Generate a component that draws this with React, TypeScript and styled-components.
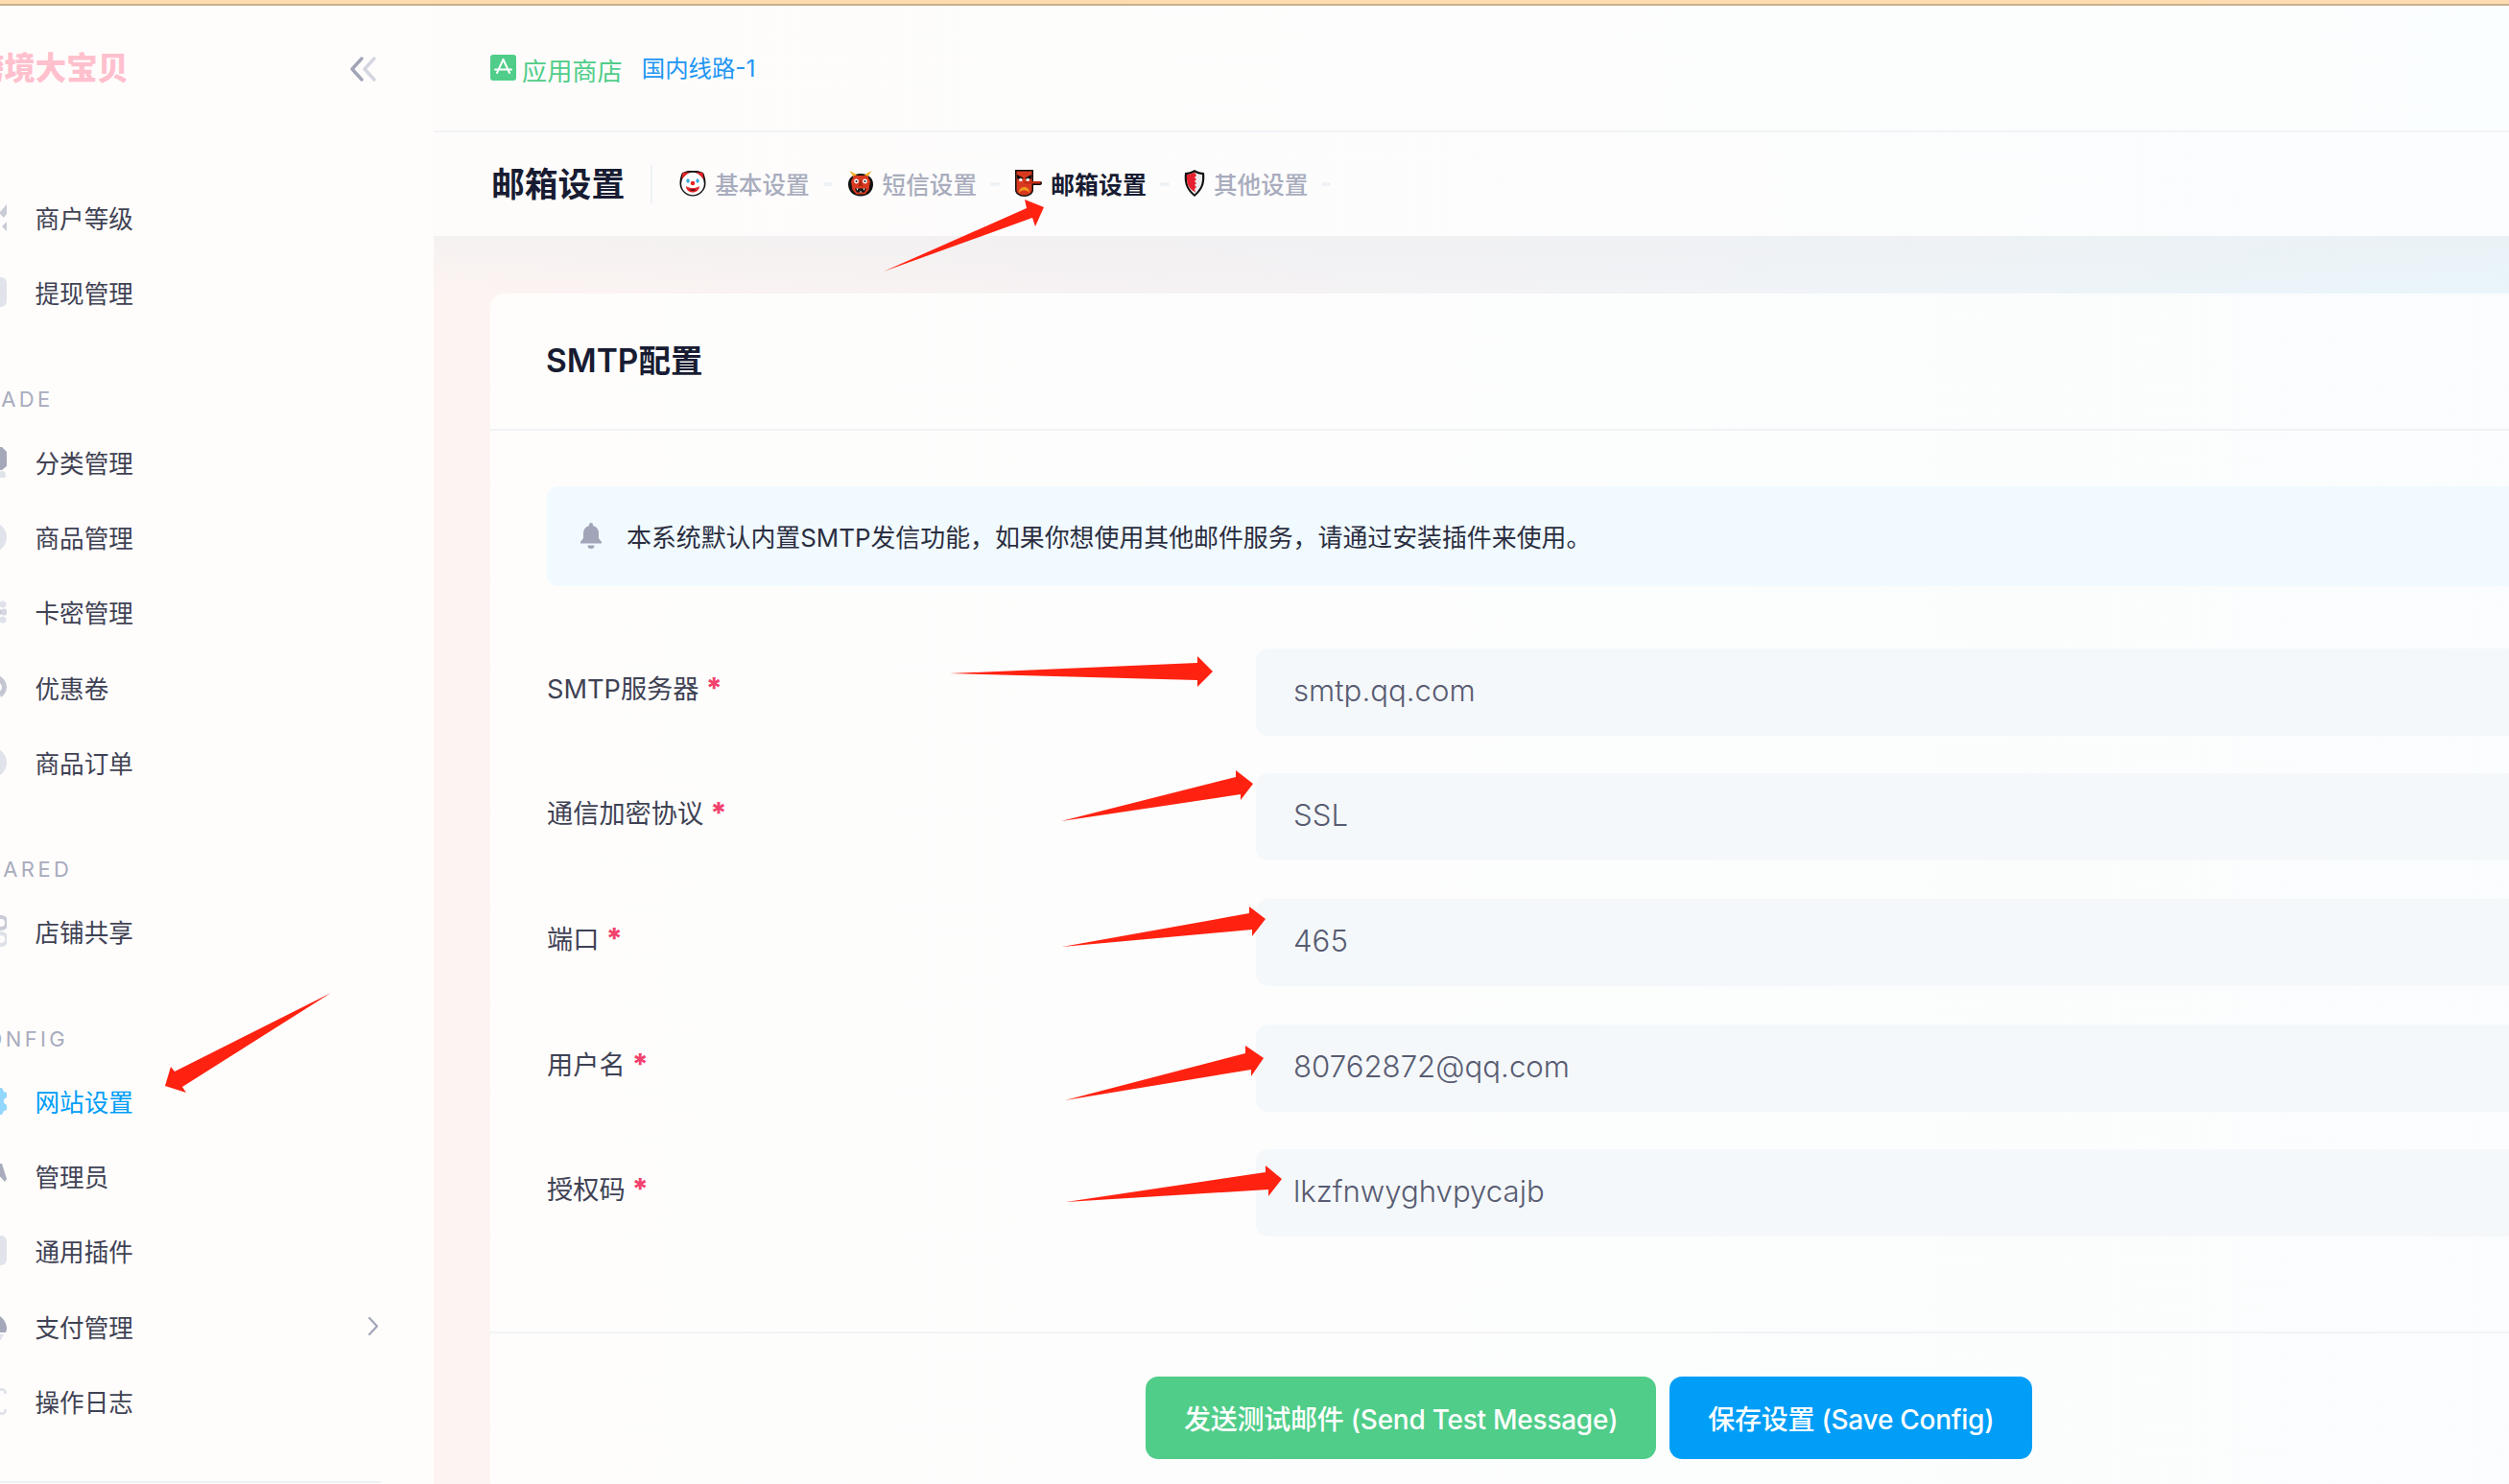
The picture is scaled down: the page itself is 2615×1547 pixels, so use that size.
import React from "react";
import styled, { createGlobalStyle } from "styled-components";

const GlobalStyle = createGlobalStyle`
  html, body {
    margin: 0;
    padding: 0;
    overflow: hidden;
    background: #fdf5f3;
  }
  * {
    box-sizing: border-box;
  }
`;

const FONT = `Inter, "Noto Sans CJK SC", sans-serif`;

const Page = styled.div`
  position: relative;
  width: 2615px;
  height: 1547px;
  overflow: hidden;
  font-family: ${FONT};
`;

const TopStrip = styled.div`
  height: 6px;
  background: #ffdcb0;
  border-bottom: 2px solid #c9b08f;
`;

const Shell = styled.div`
  display: flex;
  height: 1541px;
`;

const Sidebar = styled.aside`
  flex: 0 0 452px;
  background: #fffdfc;
  overflow: hidden;
`;

const LogoRow = styled.div`
  display: flex;
  align-items: center;
  justify-content: space-between;
  height: 132px;
  margin-left: -28px;
  padding-right: 59px;
`;

const Logo = styled.div`
  font-size: 32.4px;
  line-height: 1;
  font-weight: 900;
  color: #ffc0cd;
`;

const Menu = styled.nav`
  margin-top: 49.5px;
  margin-left: -26px;
  padding-right: 57px;
`;

const SectionLabel = styled.div`
  display: flex;
  align-items: flex-end;
  height: 98.5px;
  margin-left: -8px;
  padding-bottom: 13px;
  font-size: 22px;
  line-height: 26px;
  letter-spacing: 3.4px;
  color: #a8acbd;
`;

const MenuItem = styled.div<{ $active?: boolean }>`
  display: flex;
  align-items: center;
  height: 78.2px;
  gap: 29.5px;
  font-size: 25.6px;
  color: ${(p) => (p.$active ? "#009ef7" : "#3f4254")};
`;

const MenuText = styled.span`
  flex: 1;
`;

const SidebarFoot = styled.div`
  margin-top: 45px;
  width: 397px;
  border-top: 2px solid #eff2f5;
`;

const Main = styled.main`
  flex: 1;
  min-width: 0;
  display: flex;
  flex-direction: column;
`;

const Header = styled.header`
  display: flex;
  align-items: center;
  gap: 20px;
  height: 132px;
  padding: 0 0 2px 59px;
  background: linear-gradient(90deg, #fefcfb, #fbfefe);
  border-bottom: 2px solid #f2f3f6;
`;

const StoreLink = styled.div`
  display: flex;
  align-items: center;
  gap: 6px;
  font-size: 26.2px;
  color: #50cd89;

  span {
    margin-top: 5px;
  }
`;

const LineLink = styled.div`
  margin-top: -2px;
  font-size: 24.4px;
  color: #2196f3;
`;

const Toolbar = styled.div`
  display: flex;
  align-items: center;
  height: 108px;
  padding-left: 60px;
  background: linear-gradient(90deg, #fefcfb, #fbfdfe);
`;

const PageTitle = styled.h1`
  margin: 0;
  font-size: 34.8px;
  line-height: 1;
  font-weight: 700;
  color: #181c32;
`;

const ToolbarRule = styled.div`
  width: 2px;
  height: 40px;
  margin: 0 28px 0 27px;
  background: #eff2f5;
`;

const Tab = styled.div<{ $active?: boolean }>`
  display: flex;
  align-items: center;
  gap: 9px;
  margin-top: -2px;
  font-size: ${(p) => (p.$active ? "25px" : "24.6px")};
  font-weight: ${(p) => (p.$active ? 600 : 500)};
  color: ${(p) => (p.$active ? "#181c32" : "#a8acbd")};
`;

const TabDash = styled.span`
  width: 10px;
  height: 4px;
  margin: 0 15px 0 14px;
  border-radius: 2px;
  background: #eff2f5;
`;

const Content = styled.div`
  flex: 1;
  min-height: 0;
  padding: 60px 0 0 59px;
  background:
    linear-gradient(180deg, rgba(236, 238, 240, 0.45), rgba(255, 255, 255, 0) 60px),
    linear-gradient(90deg, #fdf4f2 0%, #f6f2f3 35%, #e9f5fb 100%);
`;

const Card = styled.section`
  width: 2400px;
  height: 1300px;
  border-radius: 14px 14px 0 0;
  background: linear-gradient(90deg, #fefdfc, #fafdfe);
`;

const CardHead = styled.div`
  display: flex;
  align-items: center;
  height: 142.5px;
  padding-left: 58px;
  border-bottom: 2px solid #f2f3f6;
`;

const CardTitle = styled.h2`
  margin: 0;
  font-size: 33.5px;
  line-height: 1;
  font-weight: 600;
  color: #181c32;
`;

const CardBody = styled.div`
  padding: 58px 0 0 59px;
  height: 941.5px;
  border-bottom: 2px solid #f2f3f6;
`;

const Notice = styled.div`
  display: flex;
  align-items: center;
  gap: 24px;
  height: 104px;
  margin-bottom: 65px;
  padding-left: 33px;
  border-radius: 12px 0 0 12px;
  background: #f1faff;
  font-size: 25.9px;
  color: #2b2e40;
`;

const FormRow = styled.div`
  display: flex;
  align-items: flex-start;
  height: 130.7px;
`;

const FieldLabel = styled.label`
  flex: 0 0 739px;
  padding-top: 23px;
  font-size: 27.2px;
  line-height: 36px;
  color: #3f4254;
`;

const Required = styled.span`
  margin-left: 7px;
  font-size: 30px;
  font-weight: 800;
  color: #f1416c;
`;

const FieldValue = styled.div`
  flex: 1;
  height: 91px;
  padding-left: 39px;
  border-radius: 13px 0 0 13px;
  background: #f5f8fa;
  font-size: 31.2px;
  font-weight: 300;
  line-height: 89px;
  color: #585c72;
`;

const CardFoot = styled.div`
  display: flex;
  gap: 14px;
  padding: 45px 0 0 683px;
`;

const ActionButton = styled.button<{ $color: string }>`
  height: 86px;
  padding: 0 40px;
  border: 0;
  border-radius: 13px;
  background: ${(p) => p.$color};
  font-family: ${FONT};
  font-size: 28px;
  font-weight: 500;
  letter-spacing: -0.25px;
  color: #fff;
`;

const Arrows = styled.svg`
  position: absolute;
  left: 0;
  top: 0;
  pointer-events: none;
`;

const Collapse = () => (
  <svg width="28" height="26" viewBox="0 0 28 26" fill="none" strokeWidth="3.4" strokeLinecap="round" strokeLinejoin="round">
    <path d="M12 2 2 13l10 11" stroke="#a1a5b7" />
    <path d="M25 2 15 13l10 11" stroke="#d3d6df" />
  </svg>
);

const StoreIcon = () => (
  <svg width="27" height="27" viewBox="0 0 27 27">
    <rect width="27" height="27" rx="3" fill="#50cd89" />
    <path d="M13.5 5 7 19M13.5 5 20 19M5 15.5h17" stroke="#fff" strokeWidth="2" fill="none" strokeLinecap="round" />
  </svg>
);

const BellIcon = () => (
  <svg width="26" height="27" viewBox="0 0 26 27" fill="#a1a5b7">
    <path d="M13 0c1.2 0 2 .9 2 2v1c4 1 6 4.300 6 8v5l3 4v1.500H2V20l3-4v-5c0-3.700 2-7 6-8V2c0-1.100.8-2 2-2z" />
    <path d="M9.500 23.500h7a3.500 3.500 0 0 1-7 0z" />
  </svg>
);

const ChevronRight = () => (
  <svg width="12" height="21" viewBox="0 0 12 21" fill="none" stroke="#a1a5b7" strokeWidth="2.2" strokeLinecap="round" strokeLinejoin="round">
    <path d="M2 2l8 8.500L2 19" />
  </svg>
);

// only the last few pixels of these show, the sidebar is cut off at the left edge
const menuIcons: Record<string, React.ReactNode> = {
  grade: <path d="M33 3 25 12 30 17 33 13zM33 21 28 26 33 31z" fill="#c9ccd6" />,
  card: <rect x="6" y="1" width="27" height="31" rx="6" fill="#e1e3ea" />,
  hex: (
    <>
      <path d="M16 1h12l5 5v15l-5 4H16z" fill="#a4a8b9" />
      <circle cx="28" cy="30" r="4" fill="#e1e3ea" />
    </>
  ),
  circle: <circle cx="17" cy="17" r="16" fill="#e1e3ea" />,
  flower: (
    <>
      <circle cx="29" cy="9" r="3.500" fill="#dfe1e8" />
      <circle cx="30" cy="17" r="3.500" fill="#d5d8e1" />
      <circle cx="29" cy="25" r="3.500" fill="#dfe1e8" />
      <circle cx="24" cy="17" r="3.500" fill="#c4c7d2" />
    </>
  ),
  ring: <path d="M18 3a14 14 0 0 1 15 13c0 5-3 9-6 11l-2-6c2-1 3-3 3-5a9 9 0 0 0-9-7z" fill="#c4c7d2" />,
  share: (
    <>
      <circle cx="27" cy="8" r="6" fill="none" stroke="#c9ccd6" strokeWidth="4" />
      <circle cx="27" cy="25" r="6" fill="none" stroke="#dfe1e8" strokeWidth="4" />
    </>
  ),
  gear: <path d="M24 3h4l2 4 3 1v5l-3 2v4l3 2v5l-3 1-2 4h-8V3z" fill="#93d6fb" />,
  person: <path d="M24 4l4 0 5 16-2 3-7-8z" fill="#a8acbd" />,
  pay: (
    <>
      <path d="M14 3a17 17 0 0 1 19 15c0 1 0 3-1 5H14z" fill="#a4a8b9" />
      <path d="M14 25h16l-3 6H14z" fill="#e1e3ea" />
    </>
  ),
  log: <path d="M26 3h4l3 3v3h-3V6h-4zM30 25h3v3l-3 3h-4v-3h4z" fill="#e1e3ea" />,
};

const MenuIcon = ({ name }: { name: string }) => (
  <svg width="33" height="33" viewBox="0 0 33 33">
    {menuIcons[name]}
  </svg>
);

const ClownEmoji = () => (
  <svg width="28" height="28" viewBox="0 0 28 28">
    <path d="M3 3 9 1h10l6 2c1.500 3 2.500 7 2.500 11a13.500 13.500 0 0 1-27 0C.5 10 1.500 6 3 3z" fill="#111" />
    <circle cx="14" cy="14.500" r="11.800" fill="#fff" />
    <path d="M2.500 10 3.500 3 11 2.500C7.500 4.500 5 7 2.500 10zM25.500 10l-1-7L17 2.500C20.500 4.500 23 7 25.500 10z" fill="#e8242a" />
    <ellipse cx="9" cy="11.500" rx="1.700" ry="2.200" fill="#38a9dc" />
    <ellipse cx="19" cy="11.500" rx="1.700" ry="2.200" fill="#38a9dc" />
    <circle cx="14" cy="14" r="2.300" fill="#e8242a" />
    <path d="M7 17c2 1.500 4.500 2 7 2s5-.5 7-2c0 4-3 6.500-7 6.500S7 21 7 17z" fill="#e8242a" />
    <path d="M10.500 20c2 .8 5 .8 7 0-.8 1.300-2 1.800-3.500 1.800s-2.700-.5-3.500-1.800z" fill="#111" />
  </svg>
);

const OniEmoji = () => (
  <svg width="28" height="28" viewBox="0 0 28 28">
    <path d="M14 4c7 0 13 4 13 11 0 7-5 12.500-13 12.500S1 22 1 15C1 8 7 4 14 4z" fill="#111" />
    <path d="M7 8 2.500 1 10 5zM21 8l4.500-7L18 5z" fill="#f0b429" />
    <path d="M7 6h14l3 6-1.500 9-4 4.500H9.500l-4-4.500L4 12z" fill="#d9391f" />
    <circle cx="9.500" cy="12" r="2.400" fill="#fff" />
    <circle cx="18.500" cy="12" r="2.400" fill="#fff" />
    <circle cx="9.500" cy="12" r="1" fill="#111" />
    <circle cx="18.500" cy="12" r="1" fill="#111" />
    <path d="M14 10l2.500 7h-5z" fill="#a82812" />
    <path d="M8 19.500h12l-2 4h-8z" fill="#111" />
    <path d="M9.500 19.500h2l-1 2.200zM16.500 19.500h2l-1 2.200zM13 23.500l1-2 1 2z" fill="#fff" />
  </svg>
);

const TenguEmoji = () => (
  <svg width="29" height="28" viewBox="0 0 29 28">
    <path d="M1 0h19v12h7c1.500 0 2 1 2 1.700s-.5 2.300-2 2.300h-7v5c0 4-4.500 7-9.500 7S1 25 1 21z" fill="#111" />
    <path d="M2.500 1.500h16V21c0 3-3.500 5.500-8 5.500s-8-2.500-8-5.500z" fill="#d9391f" />
    <path d="M3 5l6.500 3.500-2 2.500L3 9zM18 5l-6.500 3.500 2 2.500L18 9z" fill="#111" />
    <circle cx="6.800" cy="10.500" r="1.800" fill="#fff" />
    <circle cx="14.200" cy="10.500" r="1.800" fill="#fff" />
    <path d="M10.500 12H27c1 0 1 2.500 0 2.500H10.500z" fill="#c22a16" />
    <path d="M5 24c0-4 3-6 5.500-6s5.500 2 5.500 6c-1.500-2-3.500-2.800-5.500-2.800S6.500 22 5 24z" fill="#f29a1f" />
  </svg>
);

const ShieldEmoji = () => (
  <svg width="22" height="28" viewBox="0 0 22 28">
    <path d="M11 0c3 2 7 3 10 3 1 9 0 17-10 25C1 20 0 12 1 3c3 0 7-1 10-3z" fill="#111" />
    <path d="M11 2.500c2.500 1.500 5 2.300 8 2.500.5 7.500-.5 14-8 20.500C3.500 19 2.500 12.500 3 5c3-.2 5.500-1 8-2.500z" fill="#ececec" />
    <path d="M11 2.500 13 6l-2 2 2 2-2 2 2 2-2 2 2 2-2 2 1 3.500C3.500 19 2.500 12.500 3 5c3-.2 5.500-1 8-2.500z" fill="#e5202e" />
  </svg>
);

type NavRow =
  | { label: string }
  | { text: string; icon: string; active?: boolean; more?: boolean };

const navRows: NavRow[] = [
  { text: "商户等级", icon: "grade" },
  { text: "提现管理", icon: "card" },
  { label: "TRADE" },
  { text: "分类管理", icon: "hex" },
  { text: "商品管理", icon: "circle" },
  { text: "卡密管理", icon: "flower" },
  { text: "优惠卷", icon: "ring" },
  { text: "商品订单", icon: "circle" },
  { label: "SHARED" },
  { text: "店铺共享", icon: "share" },
  { label: "CONFIG" },
  { text: "网站设置", icon: "gear", active: true },
  { text: "管理员", icon: "person" },
  { text: "通用插件", icon: "card" },
  { text: "支付管理", icon: "pay", more: true },
  { text: "操作日志", icon: "log" },
];

const tabs = [
  { text: "基本设置", emoji: <ClownEmoji /> },
  { text: "短信设置", emoji: <OniEmoji /> },
  { text: "邮箱设置", emoji: <TenguEmoji />, active: true },
  { text: "其他设置", emoji: <ShieldEmoji /> },
];

const fields = [
  { label: "SMTP服务器", value: "smtp.qq.com" },
  { label: "通信加密协议", value: "SSL" },
  { label: "端口", value: "465" },
  { label: "用户名", value: "80762872@qq.com" },
  { label: "授权码", value: "lkzfnwyghvpycajb" },
];

const arrows = [
  "921,283 1070,217 1068,208 1088,216 1079,236 1076,227",
  "345,1035 182,1117 178,1112 172,1132 194,1139 190,1133",
  "990,702 1248,691 1248,684 1264,700 1248,716 1248,709",
  "1106,856 1288,810 1288,803 1306,817 1293,834 1293,828",
  "1107,987 1302,952 1302,945 1319,958 1305,976 1305,969",
  "1110,1147 1298,1098 1298,1090 1317,1103 1304,1122 1304,1115",
  "1111,1253 1319,1222 1319,1215 1336,1229 1322,1247 1322,1240",
];

export default function App() {
  return (
    <Page>
      <GlobalStyle />
      <TopStrip />
      <Shell>
        <Sidebar>
          <LogoRow>
            <Logo>跨境大宝贝</Logo>
            <Collapse />
          </LogoRow>
          <Menu>
            {navRows.map((row, idx) =>
              "label" in row ? (
                <SectionLabel key={idx}>{row.label}</SectionLabel>
              ) : (
                <MenuItem key={idx} $active={row.active}>
                  <MenuIcon name={row.icon} />
                  <MenuText>{row.text}</MenuText>
                  {row.more ? <ChevronRight /> : null}
                </MenuItem>
              )
            )}
          </Menu>
          <SidebarFoot />
        </Sidebar>
        <Main>
          <Header>
            <StoreLink>
              <StoreIcon />
              <span>应用商店</span>
            </StoreLink>
            <LineLink>国内线路-1</LineLink>
          </Header>
          <Toolbar>
            <PageTitle>邮箱设置</PageTitle>
            <ToolbarRule />
            {tabs.map((tab) => (
              <React.Fragment key={tab.text}>
                <Tab $active={tab.active}>
                  {tab.emoji}
                  {tab.text}
                </Tab>
                <TabDash />
              </React.Fragment>
            ))}
          </Toolbar>
          <Content>
            <Card>
              <CardHead>
                <CardTitle>SMTP配置</CardTitle>
              </CardHead>
              <CardBody>
                <Notice>
                  <BellIcon />
                  本系统默认内置SMTP发信功能，如果你想使用其他邮件服务，请通过安装插件来使用。
                </Notice>
                {fields.map((field) => (
                  <FormRow key={field.label}>
                    <FieldLabel>
                      {field.label}
                      <Required>*</Required>
                    </FieldLabel>
                    <FieldValue>{field.value}</FieldValue>
                  </FormRow>
                ))}
              </CardBody>
              <CardFoot>
                <ActionButton $color="#50cd89">发送测试邮件 (Send Test Message)</ActionButton>
                <ActionButton $color="#009ef7">保存设置 (Save Config)</ActionButton>
              </CardFoot>
            </Card>
          </Content>
        </Main>
      </Shell>
      <Arrows width="2615" height="1547" viewBox="0 0 2615 1547">
        {arrows.map((points) => (
          <polygon key={points} points={points} fill="#ff2211" />
        ))}
      </Arrows>
    </Page>
  );
}
